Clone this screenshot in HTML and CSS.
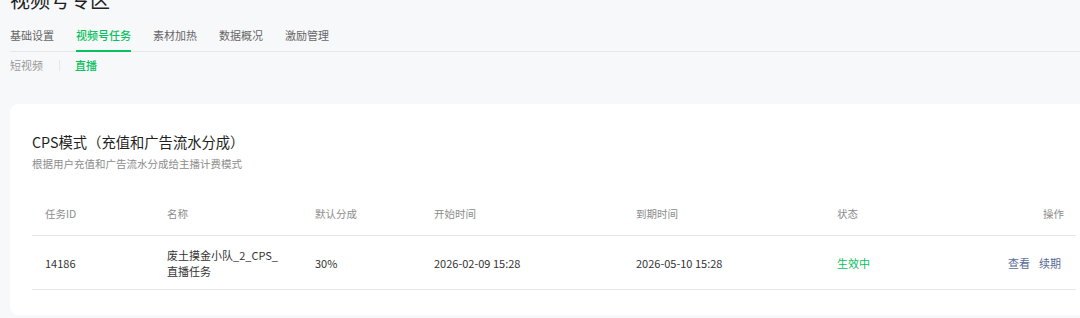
FILE: index.html
```html
<!DOCTYPE html>
<html lang="zh-CN">
<head>
  <meta charset="UTF-8" />
  <meta name="viewport" content="width=device-width, initial-scale=1.0"/>
  <title>视频号专区</title>
  <link rel="stylesheet" href="styles.css">
</head>
<body>
  <div class="page">
    <h1 class="page-title">视频号专区</h1>

    <nav class="tabs">
      <a class="tab">基础设置</a>
      <a class="tab active">视频号任务</a>
      <a class="tab">素材加热</a>
      <a class="tab">数据概况</a>
      <a class="tab">激励管理</a>
    </nav>

    <div class="subtabs">
      <a class="subtab">短视频</a>
      <span class="subtab-divider"></span>
      <a class="subtab active">直播</a>
    </div>

    <section class="card">
      <h2 class="card-title">CPS模式（充值和广告流水分成）</h2>
      <p class="card-desc">根据用户充值和广告流水分成给主播计费模式</p>

      <div class="table">
        <div class="row head">
          <div>任务ID</div>
          <div>名称</div>
          <div>默认分成</div>
          <div>开始时间</div>
          <div>到期时间</div>
          <div>状态</div>
          <div class="ops">操作</div>
        </div>
        <div class="row">
          <div>14186</div>
          <div class="name">废土摸金小队_2_CPS_直播任务</div>
          <div>30%</div>
          <div>2026-02-09 15:28</div>
          <div>2026-05-10 15:28</div>
          <div class="status">生效中</div>
          <div class="ops actions">
            <a class="link">查看</a>
            <a class="link">续期</a>
          </div>
        </div>
      </div>
    </section>
  </div>
</body>
</html>
```

FILE: styles.css
```css
:root {
  --green: #07c160;
  --link: #576b95;
  --bg: #f7f8fa;
  --white: #ffffff;
  --text-dark: #1f1f1f;
  --text: #333333;
  --text-grey: #8c8c8c;
  --line: #e7e7e7;
}

* {
  box-sizing: border-box;
  margin: 0;
  padding: 0;
}

body {
  font-family: "Noto Sans CJK SC", "Noto Sans", sans-serif;
  background-color: var(--bg);
  color: var(--text);
  overflow: hidden;
}

.page {
  width: 1098px;
  padding-left: 10px;
}

.page-title {
  font-size: 20px;
  line-height: 28px;
  font-weight: 400;
  color: var(--text-dark);
  margin-top: -14px;
}

.tabs {
  display: flex;
  gap: 22px;
  margin-top: 13px;
  border-bottom: 1px solid var(--line);
}

.tab {
  font-size: 11px;
  line-height: 16px;
  color: #666;
  padding-bottom: 7px;
  border-bottom: 2px solid transparent;
  margin-bottom: -1px;
}

.tab.active {
  color: var(--green);
  border-bottom-color: var(--green);
  font-weight: 500;
}

.subtabs {
  display: flex;
  align-items: center;
  margin-top: 5px;
  font-size: 11px;
  line-height: 16px;
}

.subtab {
  color: #999;
}

.subtab.active {
  color: var(--green);
  font-weight: 500;
}

.subtab-divider {
  width: 1px;
  height: 11px;
  background-color: var(--line);
  margin: 0 15px 0 16px;
}

.card {
  margin-top: 31px;
  background-color: var(--white);
  border-radius: 8px;
  padding: 28px 22px 25px;
}

.card-title {
  font-size: 14.3px;
  line-height: 20px;
  font-weight: 400;
  color: var(--text-dark);
}

.card-desc {
  margin-top: 4px;
  font-size: 10.5px;
  line-height: 16px;
  color: var(--text-grey);
}

.table {
  margin-top: 20px;
}

.row {
  display: grid;
  grid-template-columns: 122px 148px 119px 202px 201px 1fr 120px;
  align-items: center;
  padding: 0 12px 0 13px;
  border-bottom: 1px solid var(--line);
  font-size: 11px;
  line-height: 16px;
  min-height: 54px;
}

.row.head {
  min-height: 44px;
  color: var(--text-grey);
  font-size: 10.5px;
}

.name {
  width: 112px;
}

.status {
  color: var(--green);
}

.ops {
  text-align: right;
}

.actions {
  display: flex;
  justify-content: flex-end;
  gap: 9px;
  padding-right: 3px;
}

.link {
  color: var(--link);
}
```
